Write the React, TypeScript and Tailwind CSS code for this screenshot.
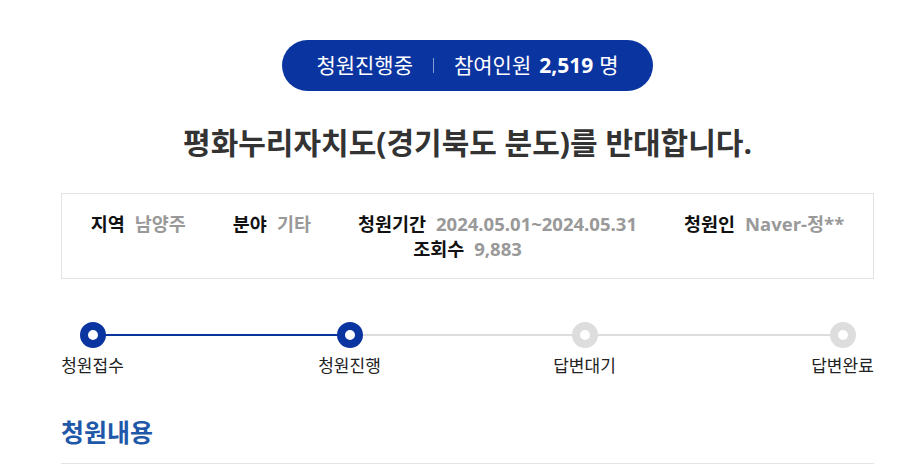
const FONT = { fontFamily: '"Open Sans", "Noto Sans CJK KR", sans-serif' };

const infos = [
  { label: "지역", value: "남양주" },
  { label: "분야", value: "기타" },
  { label: "청원기간", value: "2024.05.01~2024.05.31" },
  { label: "청원인", value: "Naver-정**" },
  { label: "조회수", value: "9,883" },
];

function Dot({ active }: { active: boolean }) {
  return (
    <span
      className={
        "relative z-10 block h-[26px] w-[26px] rounded-full border-[8px] bg-white " +
        (active ? "border-[#0a34a0]" : "border-[#dddddd]")
      }
    />
  );
}

export default function App() {
  return (
    <div className="min-h-[464px] bg-white text-[#222]" style={FONT}>
      <div className="ml-[61px] w-[813px] pt-[40px]">
        <div className="flex justify-center">
          <div className="flex h-[51px] items-center rounded-full bg-[#0a34a0] px-[34px] text-[21px] text-white">
            <span>청원진행중</span>
            <span className="mx-[20px] h-[15px] w-px bg-white/50" />
            <span>참여인원</span>
            <span className="ml-[8px] font-bold">2,519</span>
            <span className="ml-[6px]">명</span>
          </div>
        </div>

        <h1 className="mt-[34px] text-center text-[30px] font-bold leading-[36px] text-[#333]">
          평화누리자치도(경기북도 분도)를 반대합니다.
        </h1>

        <div className="mt-[32px] flex h-[86px] flex-wrap content-center justify-center gap-x-[47px] border border-[#e3e3e3] px-[20px] text-[18.5px] leading-[25px]">
          {infos.map((i) => (
            <div key={i.label} className="flex gap-[10px]">
              <span className="font-bold text-[#111]">{i.label}</span>
              <span className="font-bold text-[#999]">{i.value}</span>
            </div>
          ))}
        </div>

        <div className="relative mt-[43px]">
          <div className="absolute left-[31px] right-[31px] top-[12px] h-[2px] bg-[#dddddd]" />
          <div className="absolute left-[31px] top-[12px] h-[2px] w-[257px] bg-[#0a34a0]" />
          <div className="flex text-[17px] leading-[22px] text-[#222]">
            <div className="flex w-[63px] flex-col items-center gap-[7px]">
              <Dot active />
              <span className="whitespace-nowrap">청원접수</span>
            </div>
            <div className="ml-[194px] flex w-[63px] flex-col items-center gap-[7px]">
              <Dot active />
              <span className="whitespace-nowrap">청원진행</span>
            </div>
            <div className="ml-[172px] flex w-[63px] flex-col items-center gap-[7px]">
              <Dot active={false} />
              <span className="whitespace-nowrap">답변대기</span>
            </div>
            <div className="ml-auto flex w-[63px] flex-col items-center gap-[7px]">
              <Dot active={false} />
              <span className="whitespace-nowrap">답변완료</span>
            </div>
          </div>
        </div>

        <h2 className="mt-[40px] border-b border-[#e3e3e3] pb-[16px] text-[25px] font-bold leading-[30px] text-[#1f58a8]">
          청원내용
        </h2>
      </div>
    </div>
  );
}
